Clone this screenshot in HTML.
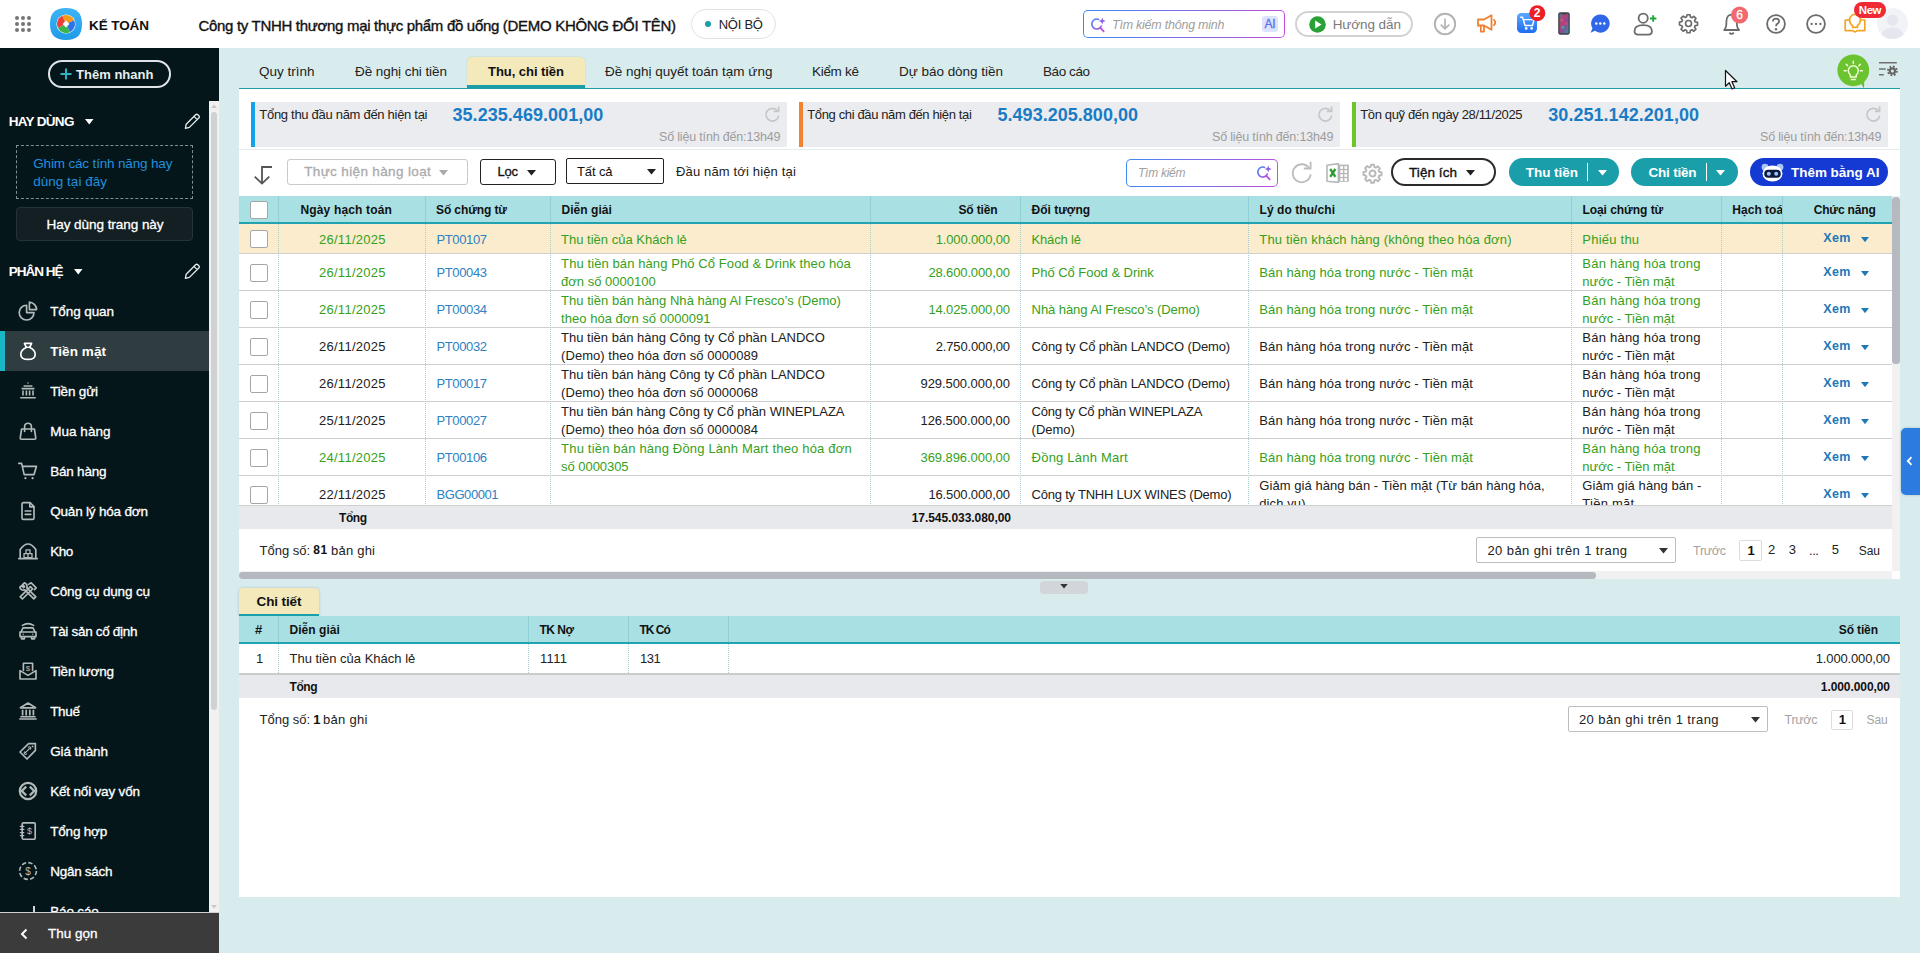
<!DOCTYPE html>
<html lang="vi"><head><meta charset="utf-8"><title>Kế toán - Thu, chi tiền</title>
<style>
html,body{margin:0;padding:0;}
body{width:1920px;height:953px;overflow:hidden;position:relative;background:#d8eced;font-family:"Liberation Sans", sans-serif;}
#root{position:absolute;left:0;top:0;width:1920px;height:953px;overflow:hidden;}
#root div,#root svg{position:absolute;box-sizing:border-box;}
.t{position:absolute;white-space:nowrap;display:block;}

.cb{background:#fff;border:1px solid #a6a6a6;border-radius:2px;}

</style></head><body><div id="root">
<div style="left:0px;top:0px;width:1920px;height:48px;background:#fff;"></div>
<div style="left:15px;top:16px;width:4px;height:4px;background:#757575;border-radius:50%;"></div>
<div style="left:21px;top:16px;width:4px;height:4px;background:#757575;border-radius:50%;"></div>
<div style="left:27px;top:16px;width:4px;height:4px;background:#757575;border-radius:50%;"></div>
<div style="left:15px;top:22px;width:4px;height:4px;background:#757575;border-radius:50%;"></div>
<div style="left:21px;top:22px;width:4px;height:4px;background:#757575;border-radius:50%;"></div>
<div style="left:27px;top:22px;width:4px;height:4px;background:#757575;border-radius:50%;"></div>
<div style="left:15px;top:28px;width:4px;height:4px;background:#757575;border-radius:50%;"></div>
<div style="left:21px;top:28px;width:4px;height:4px;background:#757575;border-radius:50%;"></div>
<div style="left:27px;top:28px;width:4px;height:4px;background:#757575;border-radius:50%;"></div>
<svg style="left:50px;top:8px" width="32" height="32" viewBox="0 0 32 32">
<defs><linearGradient id="lg" x1="0" y1="0" x2="0" y2="1"><stop offset="0" stop-color="#3db4f5"/><stop offset="1" stop-color="#1f9ae8"/></linearGradient></defs>
<path d="M16 0C27 0 32 5 32 16S27 32 16 32 0 27 0 16 5 0 16 0Z" fill="url(#lg)"/>
<circle cx="16" cy="16" r="9.6" fill="#fff"/>
<path d="M16 16 L9.6 9.6 A9 9 0 0 1 22.4 9.6Z" fill="#f59b1c" transform="rotate(20 16 16)"/>
<path d="M16 16 L22.4 9.6 A9 9 0 0 1 22.4 22.4Z" fill="#2a74e8" transform="rotate(20 16 16)"/>
<path d="M16 16 L22.4 22.4 A9 9 0 0 1 9.6 22.4Z" fill="#3bb54a" transform="rotate(20 16 16)"/>
<path d="M16 16 L9.6 22.4 A9 9 0 0 1 9.6 9.6Z" fill="#ef3e36" transform="rotate(20 16 16)"/>
<rect x="13.6" y="13.6" width="4.8" height="4.8" fill="#fff" transform="rotate(45 16 16)"/>
</svg>
<div style="left:691px;top:9px;width:85px;height:30px;background:#fff;border:1px solid #e2e2e2;border-radius:15px;"></div>
<div style="left:704.5px;top:21px;width:6px;height:6px;background:#1a9eaa;border-radius:50%;"></div>
<div style="left:0px;top:48px;width:219px;height:905px;background:#04161a;"></div>
<div style="left:209px;top:101px;width:10px;height:811px;background:#f1f1f1;"></div>
<div style="left:211px;top:112px;width:6px;height:597.5px;background:#cfd1d4;border-radius:3px;"></div>
<svg style="left:209px;top:101px" width="10" height="10"><path d="M2 7 L5 3.5 L8 7Z" fill="#c8c8c8"/></svg>
<svg style="left:209px;top:902px" width="10" height="10"><path d="M2 3 L5 6.5 L8 3Z" fill="#c8c8c8"/></svg>
<div style="left:48px;top:60px;width:123px;height:28px;border:2px solid #dfe5e6;border-radius:14px;"></div>
<svg style="left:60px;top:68px" width="12" height="12"><path d="M6 0.5V11.5M0.5 6H11.5" stroke="#2fb3c0" stroke-width="2" fill="none"/></svg>
<svg style="left:85px;top:119px" width="9" height="6"><path d="M0 0H8.5L4.25 5.5Z" fill="#fff"/></svg>
<div style="left:16px;top:145px;width:177px;height:54px;border:1px dashed #7f8f91;"></div>
<div style="left:16px;top:207px;width:177px;height:34px;background:#131f23;border:1px solid #263236;border-radius:4px;"></div>
<svg style="left:74px;top:269px" width="9" height="6"><path d="M0 0H8.5L4.25 5.5Z" fill="#fff"/></svg>
<svg style="left:184px;top:113px" width="17" height="17" viewBox="0 0 17 17"><path d="M2.2 11.2 L11.6 1.8 a1.6 1.6 0 0 1 2.2 0 l1 1 a1.6 1.6 0 0 1 0 2.2 L5.4 14.4 L1.4 15.4 Z M10 3.4 L13.2 6.6" fill="none" stroke="#e6ecec" stroke-width="1.3" stroke-linejoin="round"/></svg>
<svg style="left:184px;top:263px" width="17" height="17" viewBox="0 0 17 17"><path d="M2.2 11.2 L11.6 1.8 a1.6 1.6 0 0 1 2.2 0 l1 1 a1.6 1.6 0 0 1 0 2.2 L5.4 14.4 L1.4 15.4 Z M10 3.4 L13.2 6.6" fill="none" stroke="#e6ecec" stroke-width="1.3" stroke-linejoin="round"/></svg>
<div style="left:0px;top:331px;width:209px;height:40px;background:#2f3d40;"></div>
<div style="left:0px;top:331px;width:5px;height:40px;background:#19b6c6;"></div>
<div style="left:0;top:892px;width:209px;height:20px;overflow:hidden"><span class="t" style="left:50.2px;top:9.8px;font-size:13.5px;line-height:20px;letter-spacing:-.15px;color:#fff;-webkit-text-stroke:.3px #fff">Báo cáo</span><div style="left:33px;top:14px;width:2px;height:8px;background:#cfd6d6"></div></div>
<div style="left:0px;top:912px;width:219px;height:1px;background:#d0d0d0;"></div>
<div style="left:0px;top:913px;width:219px;height:40px;background:#3b3b3c;"></div>
<svg style="left:20px;top:928px" width="8" height="12"><path d="M6.5 1.5 L2 6 L6.5 10.5" fill="none" stroke="#fff" stroke-width="2"/></svg>
<div style="left:467px;top:57px;width:118px;height:31px;background:#f4e9bb;border-radius:5px 5px 0 0;border-bottom:3px solid #1a9eaa;box-shadow:0 0 2px rgba(0,0,0,.12);"></div>
<div style="left:239px;top:88px;width:1661px;height:1px;background:#1a9eaa;"></div>
<div style="left:239px;top:89px;width:1661px;height:482px;background:#fff;"></div>
<div style="left:251px;top:102px;width:536px;height:45px;background:#ebecf0;"></div>
<div style="left:251px;top:102px;width:4px;height:45px;background:#14a3e6;"></div>
<svg style="left:763.5px;top:106px" width="17" height="17" viewBox="0 0 24 24"><path d="M20.7 13.4 A9 9 0 1 1 19.1 7" fill="none" stroke="#c6c6c6" stroke-width="2.4"/><path d="M20.6 0.8 V7.5 H13.8" fill="none" stroke="#c6c6c6" stroke-width="2.4"/></svg>
<div style="left:799px;top:102px;width:541px;height:45px;background:#ebecf0;"></div>
<div style="left:799px;top:102px;width:4px;height:45px;background:#f08232;"></div>
<svg style="left:1316.5px;top:106px" width="17" height="17" viewBox="0 0 24 24"><path d="M20.7 13.4 A9 9 0 1 1 19.1 7" fill="none" stroke="#c6c6c6" stroke-width="2.4"/><path d="M20.6 0.8 V7.5 H13.8" fill="none" stroke="#c6c6c6" stroke-width="2.4"/></svg>
<div style="left:1352px;top:102px;width:536px;height:45px;background:#ebecf0;"></div>
<div style="left:1352px;top:102px;width:4px;height:45px;background:#6cc52f;"></div>
<svg style="left:1864.5px;top:106px" width="17" height="17" viewBox="0 0 24 24"><path d="M20.7 13.4 A9 9 0 1 1 19.1 7" fill="none" stroke="#c6c6c6" stroke-width="2.4"/><path d="M20.6 0.8 V7.5 H13.8" fill="none" stroke="#c6c6c6" stroke-width="2.4"/></svg>
<div style="left:239px;top:149px;width:1661px;height:1px;background:#e2ecec;"></div>
<svg style="left:253px;top:165px" width="20" height="21" viewBox="0 0 20 21"><path d="M19 2 H9 V18 M1.7 11.6 L9 18.6 L16.3 11.6" fill="none" stroke="#555" stroke-width="1.8"/></svg>
<div style="left:287px;top:159px;width:181px;height:26px;background:#fff;border:1px solid #c9c9c9;border-radius:3px;"></div>
<svg style="left:438.5px;top:169.5px" width="9" height="6"><path d="M0 0H9L4.5 5.5Z" fill="#ababab"/></svg>
<div style="left:480px;top:159px;width:76px;height:26px;background:#fff;border:1px solid #222;border-radius:3px;"></div>
<svg style="left:526.5px;top:169.5px" width="9" height="6"><path d="M0 0H9L4.5 5.5Z" fill="#222"/></svg>
<div style="left:566px;top:158px;width:98px;height:26px;background:#fff;border:1px solid #222;border-radius:2px;"></div>
<svg style="left:646.5px;top:168.5px" width="9" height="6"><path d="M0 0H9L4.5 5.5Z" fill="#222"/></svg>
<div style="left:1126px;top:159px;width:152px;height:28px;background:linear-gradient(90deg,#3d8bf0,#c04fe0);border-radius:5px;"></div>
<div style="left:1127.3px;top:160.3px;width:149.4px;height:25.4px;background:#fff;border-radius:4px;"></div>
<svg style="left:1255.5px;top:165px" width="16" height="16" viewBox="0 0 16 16"><defs><linearGradient id="g1" x1="0" y1="0" x2="1" y2="1"><stop offset="0" stop-color="#3f8cf0"/><stop offset="1" stop-color="#b44ee0"/></linearGradient></defs><path d="M9.2 2.6 A5 5 0 1 0 11.6 8.6" fill="none" stroke="url(#g1)" stroke-width="1.6"/><path d="M9.8 10.4 L14.2 14.8" stroke="#b44ee0" stroke-width="1.7" fill="none"/><path d="M12.2 0.4 L13.1 3.1 L15.8 4 L13.1 4.9 L12.2 7.6 L11.3 4.9 L8.6 4 L11.3 3.1 Z" fill="#8a5ce6"/></svg>
<svg style="left:1289.5px;top:160.5px" width="24" height="24" viewBox="0 0 24 24"><path d="M20.7 13.4 A9 9 0 1 1 19.1 7" fill="none" stroke="#bcbcbc" stroke-width="1.8"/><path d="M20.6 0.8 V7.5 H13.8" fill="none" stroke="#bcbcbc" stroke-width="1.8"/></svg>
<svg style="left:1326px;top:163px" width="24" height="20" viewBox="0 0 24 20"><rect x="11.5" y="1.6" width="11.3" height="17.2" fill="#b7b7b7"/><rect x="14.3" y="3.2" width="2.7" height="2.7" fill="#fff"/><rect x="14.3" y="7.2" width="2.7" height="2.7" fill="#fff"/><rect x="14.3" y="11.2" width="2.7" height="2.7" fill="#fff"/><rect x="14.3" y="15.2" width="2.7" height="2.7" fill="#fff"/><rect x="18.4" y="3.2" width="2.7" height="2.7" fill="#fff"/><rect x="18.4" y="7.2" width="2.7" height="2.7" fill="#fff"/><rect x="18.4" y="11.2" width="2.7" height="2.7" fill="#fff"/><rect x="18.4" y="15.2" width="2.7" height="2.7" fill="#fff"/><path d="M1 2.2 L12.4 0.6 V19.4 L1 18.2Z" fill="#fff" stroke="#b7b7b7" stroke-width="1.6" stroke-linejoin="round"/><path d="M4.2 6 L9.4 13.8 M9.4 6 L4.2 13.8" stroke="#2a9d2f" stroke-width="2.3"/></svg>
<svg style="left:1362.3px;top:162.5px" width="21" height="21" viewBox="0 0 24 24"><path d="M10.3 2h3.4l.5 2.7 1.6.7 2.3-1.6 2.4 2.4-1.6 2.3.7 1.6 2.7.5v3.4l-2.7.5-.7 1.6 1.6 2.3-2.4 2.4-2.3-1.6-1.6.7-.5 2.7h-3.4l-.5-2.7-1.6-.7-2.3 1.6-2.4-2.4 1.6-2.3-.7-1.6L1.7 13.7v-3.4l2.7-.5.7-1.6-1.6-2.3 2.4-2.4 2.3 1.6 1.6-.7z" fill="none" stroke="#b9b9b9" stroke-width="2.2" stroke-linejoin="round"/><circle cx="12" cy="12" r="3.4" fill="none" stroke="#b9b9b9" stroke-width="2.2"/></svg>
<div style="left:1391px;top:158px;width:105px;height:28px;background:#fff;border:2px solid #2b2b2b;border-radius:14px;"></div>
<svg style="left:1465.5px;top:170px" width="9" height="6"><path d="M0 0H9L4.5 5.5Z" fill="#222"/></svg>
<div style="left:1509px;top:158px;width:110px;height:28px;background:#1a9eaa;border-radius:14px;"></div>
<div style="left:1587px;top:163px;width:1px;height:18px;background:#fff;"></div>
<svg style="left:1597.5px;top:170px" width="9" height="6"><path d="M0 0H9L4.5 5.5Z" fill="#fff"/></svg>
<div style="left:1631px;top:158px;width:107px;height:28px;background:#1a9eaa;border-radius:14px;"></div>
<div style="left:1706px;top:163px;width:1px;height:18px;background:#fff;"></div>
<svg style="left:1716px;top:170px" width="9" height="6"><path d="M0 0H9L4.5 5.5Z" fill="#fff"/></svg>
<div style="left:1750px;top:158px;width:138px;height:28px;background:#1539d3;border-radius:14px;"></div>
<svg style="left:1760.5px;top:163px" width="23" height="19" viewBox="0 0 23 19"><circle cx="4" cy="4.2" r="3.4" fill="#a9c6f5"/><circle cx="19" cy="4.2" r="3.4" fill="#a9c6f5"/><ellipse cx="11.5" cy="10.5" rx="10" ry="8" fill="#fff"/><rect x="3.2" y="6.8" width="16.6" height="8" rx="4" fill="#0b1a3a"/><circle cx="7.8" cy="10.8" r="2" fill="#9fc2ff"/><circle cx="15.2" cy="10.8" r="2" fill="#9fc2ff"/></svg>
<div style="left:239px;top:196px;width:1653px;height:26px;background:#a9e0e4;"></div>
<div style="left:239px;top:222.1px;width:1653px;height:1.6px;background:#22a3af;"></div>
<div style="left:278.0px;top:196px;width:1px;height:26px;background:#8fcfd5;"></div>
<div style="left:278.0px;top:223.5px;width:0px;height:282px;border-left:1px dotted #a8cdd1;"></div>
<div style="left:425.0px;top:196px;width:1px;height:26px;background:#8fcfd5;"></div>
<div style="left:425.0px;top:223.5px;width:0px;height:282px;border-left:1px dotted #a8cdd1;"></div>
<div style="left:550.0px;top:196px;width:1px;height:26px;background:#8fcfd5;"></div>
<div style="left:550.0px;top:223.5px;width:0px;height:282px;border-left:1px dotted #a8cdd1;"></div>
<div style="left:870.0px;top:196px;width:1px;height:26px;background:#8fcfd5;"></div>
<div style="left:870.0px;top:223.5px;width:0px;height:282px;border-left:1px dotted #a8cdd1;"></div>
<div style="left:1020.0px;top:196px;width:1px;height:26px;background:#8fcfd5;"></div>
<div style="left:1020.0px;top:223.5px;width:0px;height:282px;border-left:1px dotted #a8cdd1;"></div>
<div style="left:1248.0px;top:196px;width:1px;height:26px;background:#8fcfd5;"></div>
<div style="left:1248.0px;top:223.5px;width:0px;height:282px;border-left:1px dotted #a8cdd1;"></div>
<div style="left:1571.0px;top:196px;width:1px;height:26px;background:#8fcfd5;"></div>
<div style="left:1571.0px;top:223.5px;width:0px;height:282px;border-left:1px dotted #a8cdd1;"></div>
<div style="left:1721.0px;top:196px;width:1px;height:26px;background:#8fcfd5;"></div>
<div style="left:1721.0px;top:223.5px;width:0px;height:282px;border-left:1px dotted #a8cdd1;"></div>
<div style="left:1782.0px;top:196px;width:1px;height:26px;background:#8fcfd5;"></div>
<div style="left:1782.0px;top:223.5px;width:0px;height:282px;border-left:1px dotted #a8cdd1;"></div>
<div style="left:239px;top:223.5px;width:1653px;height:29.5px;background:#faeccc;"></div>
<div style="left:278.0px;top:223.5px;width:0px;height:29.5px;border-left:1px dotted #a8cdd1;"></div>
<div style="left:425.0px;top:223.5px;width:0px;height:29.5px;border-left:1px dotted #a8cdd1;"></div>
<div style="left:550.0px;top:223.5px;width:0px;height:29.5px;border-left:1px dotted #a8cdd1;"></div>
<div style="left:870.0px;top:223.5px;width:0px;height:29.5px;border-left:1px dotted #a8cdd1;"></div>
<div style="left:1020.0px;top:223.5px;width:0px;height:29.5px;border-left:1px dotted #a8cdd1;"></div>
<div style="left:1248.0px;top:223.5px;width:0px;height:29.5px;border-left:1px dotted #a8cdd1;"></div>
<div style="left:1571.0px;top:223.5px;width:0px;height:29.5px;border-left:1px dotted #a8cdd1;"></div>
<div style="left:1721.0px;top:223.5px;width:0px;height:29.5px;border-left:1px dotted #a8cdd1;"></div>
<div style="left:1782.0px;top:223.5px;width:0px;height:29.5px;border-left:1px dotted #a8cdd1;"></div>
<div style="left:239px;top:253px;width:1653px;height:1px;background:#cfcfcf;"></div>
<div style="left:239px;top:290px;width:1653px;height:1px;background:#cfcfcf;"></div>
<div style="left:239px;top:327px;width:1653px;height:1px;background:#cfcfcf;"></div>
<div style="left:239px;top:364px;width:1653px;height:1px;background:#cfcfcf;"></div>
<div style="left:239px;top:401px;width:1653px;height:1px;background:#cfcfcf;"></div>
<div style="left:239px;top:438px;width:1653px;height:1px;background:#cfcfcf;"></div>
<div style="left:239px;top:475px;width:1653px;height:1px;background:#cfcfcf;"></div>
<div class="cb" style="left:250px;top:201px;width:18px;height:18px"></div>
<div class="cb" style="left:250px;top:230.2px;width:18px;height:18px"></div>
<div class="cb" style="left:250px;top:263.5px;width:18px;height:18px"></div>
<div class="cb" style="left:250px;top:300.5px;width:18px;height:18px"></div>
<div class="cb" style="left:250px;top:337.5px;width:18px;height:18px"></div>
<div class="cb" style="left:250px;top:374.5px;width:18px;height:18px"></div>
<div class="cb" style="left:250px;top:411.5px;width:18px;height:18px"></div>
<div class="cb" style="left:250px;top:448.5px;width:18px;height:18px"></div>
<div class="cb" style="left:250px;top:485.5px;width:18px;height:18px"></div>
<svg style="left:1861px;top:236.6px" width="8" height="5.2" viewBox="0 0 8 5.2"><path d="M0 0H8L4 5.2Z" fill="#1f78b8"/></svg>
<svg style="left:1861px;top:270.7px" width="8" height="5.2" viewBox="0 0 8 5.2"><path d="M0 0H8L4 5.2Z" fill="#1f78b8"/></svg>
<svg style="left:1861px;top:307.7px" width="8" height="5.2" viewBox="0 0 8 5.2"><path d="M0 0H8L4 5.2Z" fill="#1f78b8"/></svg>
<svg style="left:1861px;top:344.7px" width="8" height="5.2" viewBox="0 0 8 5.2"><path d="M0 0H8L4 5.2Z" fill="#1f78b8"/></svg>
<svg style="left:1861px;top:381.7px" width="8" height="5.2" viewBox="0 0 8 5.2"><path d="M0 0H8L4 5.2Z" fill="#1f78b8"/></svg>
<svg style="left:1861px;top:418.7px" width="8" height="5.2" viewBox="0 0 8 5.2"><path d="M0 0H8L4 5.2Z" fill="#1f78b8"/></svg>
<svg style="left:1861px;top:455.7px" width="8" height="5.2" viewBox="0 0 8 5.2"><path d="M0 0H8L4 5.2Z" fill="#1f78b8"/></svg>
<svg style="left:1861px;top:492.7px" width="8" height="5.2" viewBox="0 0 8 5.2"><path d="M0 0H8L4 5.2Z" fill="#1f78b8"/></svg>
<div style="left:239px;top:505px;width:1653px;height:1px;background:#cfcfcf;z-index:2;"></div>
<div style="left:239px;top:506px;width:1653px;height:23px;background:#e8e9ed;z-index:2;"></div>
<div style="left:1892px;top:196px;width:8px;height:375px;background:#f1f1f1;"></div>
<div style="left:1892px;top:197px;width:7.5px;height:166.5px;background:#b6b9c0;border-radius:3.5px;"></div>
<div style="left:1476px;top:537px;width:200px;height:26px;background:#fff;border:1px solid #bdbdbd;border-radius:2px;"></div>
<svg style="left:1658.5px;top:547.5px" width="9" height="6"><path d="M0 0H9L4.5 5.5Z" fill="#333"/></svg>
<div style="left:1739px;top:540px;width:23px;height:21px;background:#fff;border:1px solid #dcdcdc;border-radius:2px;"></div>
<div style="left:239px;top:571px;width:1653px;height:8px;background:#f1f1f1;"></div>
<div style="left:1892px;top:571px;width:8px;height:8px;background:#fff;"></div>
<div style="left:239px;top:571.5px;width:1357px;height:7.5px;background:#b5b8be;border-radius:4px;"></div>
<div style="left:1040px;top:581.3px;width:48px;height:12.7px;background:#d2d6db;border-radius:4px;"></div>
<svg style="left:1059.5px;top:584px" width="8" height="5" viewBox="0 0 9 6"><path d="M0 0H9L4.5 5.5Z" fill="#333"/></svg>
<div style="left:239px;top:587.5px;width:80px;height:28.5px;background:#f4e9bb;border-radius:4px 4px 0 0;border-bottom:2px solid #1a9eaa;box-shadow:0 0 3px rgba(0,0,0,.18);"></div>
<div style="left:239px;top:616px;width:1661px;height:281px;background:#fff;"></div>
<div style="left:239px;top:616px;width:1661px;height:26.5px;background:#a9e0e4;"></div>
<div style="left:239px;top:642.2px;width:1661px;height:1.7px;background:#22a3af;"></div>
<div style="left:278.0px;top:616px;width:1px;height:26px;background:#8fcfd5;"></div>
<div style="left:278.0px;top:644px;width:0px;height:29px;border-left:1px dotted #a8cdd1;"></div>
<div style="left:528.0px;top:616px;width:1px;height:26px;background:#8fcfd5;"></div>
<div style="left:528.0px;top:644px;width:0px;height:29px;border-left:1px dotted #a8cdd1;"></div>
<div style="left:628.0px;top:616px;width:1px;height:26px;background:#8fcfd5;"></div>
<div style="left:628.0px;top:644px;width:0px;height:29px;border-left:1px dotted #a8cdd1;"></div>
<div style="left:728.0px;top:616px;width:1px;height:26px;background:#8fcfd5;"></div>
<div style="left:728.0px;top:644px;width:0px;height:29px;border-left:1px dotted #a8cdd1;"></div>
<div style="left:239px;top:673px;width:1661px;height:2px;background:#cbcbcb;"></div>
<div style="left:239px;top:675px;width:1661px;height:23px;background:#e8e9ed;"></div>
<div style="left:1568px;top:706px;width:200px;height:26px;background:#fff;border:1px solid #bdbdbd;border-radius:2px;"></div>
<svg style="left:1750.5px;top:716.5px" width="9" height="6"><path d="M0 0H9L4.5 5.5Z" fill="#333"/></svg>
<div style="left:1831px;top:709.5px;width:22px;height:20px;background:#fff;border:1px solid #dcdcdc;border-radius:2px;"></div>
<div style="left:1083px;top:10px;width:202px;height:28px;background:linear-gradient(90deg,#3d8bf0,#c04fe0);border-radius:5px;"></div>
<div style="left:1084.3px;top:11.3px;width:199.4px;height:25.4px;background:#fff;border-radius:4px;"></div>
<svg style="left:1090px;top:16.5px" width="16" height="16" viewBox="0 0 16 16"><defs><linearGradient id="g2" x1="0" y1="0" x2="1" y2="1"><stop offset="0" stop-color="#3f8cf0"/><stop offset="1" stop-color="#b44ee0"/></linearGradient></defs><path d="M9.2 2.6 A5 5 0 1 0 11.6 8.6" fill="none" stroke="url(#g2)" stroke-width="1.6"/><path d="M9.8 10.4 L14.2 14.8" stroke="#b44ee0" stroke-width="1.7" fill="none"/><path d="M12.2 0.4 L13.1 3.1 L15.8 4 L13.1 4.9 L12.2 7.6 L11.3 4.9 L8.6 4 L11.3 3.1 Z" fill="#8a5ce6"/></svg>
<div style="left:1262px;top:16px;width:16px;height:15.5px;background:#dde2ff;border-radius:3px;"></div>
<div style="left:1294.5px;top:11px;width:118px;height:26px;background:#fff;border:2px solid #d2d2d2;border-radius:13px;"></div>
<svg style="left:1308.5px;top:15.6px" width="17" height="17" viewBox="0 0 17 17"><circle cx="8.5" cy="8.5" r="8.3" fill="#2aa136"/><path d="M6.1 4.4 L12.6 8.5 L6.1 12.6Z" fill="#fff"/></svg>
<svg style="left:1433px;top:12px" width="24" height="24" viewBox="0 0 24 24"><circle cx="12" cy="12" r="10.2" fill="none" stroke="#b3b3b3" stroke-width="1.9"/><path d="M12 6.5V16.5M7.8 12.6L12 16.8L16.2 12.6" fill="none" stroke="#b3b3b3" stroke-width="1.7"/></svg>
<svg style="left:1476px;top:13px" width="22" height="21" viewBox="0 0 22 21"><path d="M2 6.5 H8 L15.5 2.2 V16.8 L8 12.5 H2 Z" fill="none" stroke="#f0802f" stroke-width="1.8" stroke-linejoin="round"/><path d="M4.8 12.8 V18.6 H8 V12.8" fill="none" stroke="#f0802f" stroke-width="1.8" stroke-linejoin="round"/><path d="M18 6.8 Q20.6 9.5 18 12.2" fill="none" stroke="#f0802f" stroke-width="1.8" stroke-linecap="round"/></svg>
<svg style="left:1517px;top:5px" width="30" height="29" viewBox="0 0 30 29"><defs><linearGradient id="ct" x1="0" y1="0" x2="0" y2="1"><stop offset="0" stop-color="#5aa8ff"/><stop offset="1" stop-color="#1f6df0"/></linearGradient></defs><rect x="0" y="8" width="20" height="20" rx="4.5" fill="url(#ct)"/><path d="M3.2 12.2 H5.6 L8 20.5 H15.5 L17 14.6 H6.6" fill="none" stroke="#fff" stroke-width="1.4" stroke-linejoin="round"/><circle cx="9.2" cy="23.4" r="1.3" fill="#fff"/><circle cx="14.6" cy="23.4" r="1.3" fill="#fff"/><circle cx="20.3" cy="8.2" r="8" fill="#ee1c25"/></svg>
<svg style="left:1558px;top:12.3px" width="12" height="23" viewBox="0 0 12 23"><defs><linearGradient id="ph" x1="0" y1="0" x2="1" y2="1"><stop offset="0" stop-color="#3f7fae"/><stop offset=".3" stop-color="#b8426e"/><stop offset=".6" stop-color="#8a4a9c"/><stop offset="1" stop-color="#2e9a8c"/></linearGradient></defs><rect x="0.2" y="0.2" width="11.6" height="22.6" rx="2.2" fill="#3c4248"/><rect x="1.5" y="1.7" width="9" height="19.6" rx="1" fill="url(#ph)"/><circle cx="4" cy="8" r="1.6" fill="#e0566f" opacity=".8"/><circle cx="8" cy="11.5" r="1.8" fill="#d9476b" opacity=".7"/><circle cx="5" cy="15.5" r="1.7" fill="#3fb0a0" opacity=".7"/><rect x="3.6" y="1" width="4.8" height="1.5" rx=".7" fill="#3c4248"/></svg>
<svg style="left:1589.8px;top:14.2px" width="20" height="20" viewBox="0 0 21 21"><path d="M10.8 0.4 A9.6 9.6 0 1 1 5.2 17.6 L0.6 19.8 L2.6 15 A9.6 9.6 0 0 1 10.8 0.4Z" fill="#2f67e8"/><circle cx="6.6" cy="10" r="1.35" fill="#fff"/><circle cx="10.8" cy="10" r="1.35" fill="#fff"/><circle cx="15" cy="10" r="1.35" fill="#fff"/></svg>
<svg style="left:1633px;top:12px" width="25" height="24" viewBox="0 0 25 24"><circle cx="10.2" cy="6.2" r="4.6" fill="none" stroke="#6b6b6b" stroke-width="1.8"/><path d="M1.5 19.2 C1.5 15.2 5 13.2 10.2 13.2 S18.9 15.2 18.9 19.2 C18.9 21.4 17.4 22.6 15.4 22.6 H5 C3 22.6 1.5 21.4 1.5 19.2Z" fill="none" stroke="#6b6b6b" stroke-width="1.8"/><path d="M20.2 3.3 V9.7 M17 6.5 H23.4" stroke="#1fa83a" stroke-width="1.9"/></svg>
<svg style="left:1677.8px;top:13.3px" width="21" height="21" viewBox="0 0 24 24"><path d="M10.3 2h3.4l.5 2.7 1.6.7 2.3-1.6 2.4 2.4-1.6 2.3.7 1.6 2.7.5v3.4l-2.7.5-.7 1.6 1.6 2.3-2.4 2.4-2.3-1.6-1.6.7-.5 2.7h-3.4l-.5-2.7-1.6-.7-2.3 1.6-2.4-2.4 1.6-2.3-.7-1.6L1.7 13.7v-3.4l2.7-.5.7-1.6-1.6-2.3 2.4-2.4 2.3 1.6 1.6-.7z" fill="none" stroke="#6b6b6b" stroke-width="1.9" stroke-linejoin="round"/><circle cx="12" cy="12" r="3.4" fill="none" stroke="#6b6b6b" stroke-width="1.9"/></svg>
<svg style="left:1720px;top:6px" width="30" height="30" viewBox="0 0 30 30"><path d="M4.2 24 C6.6 21.6 6.4 18.4 6.4 15.6 C6.4 11 8.6 8.6 11.6 8.6 S16.8 11 16.8 15.6 C16.8 18.4 16.6 21.6 19 24 Z" fill="none" stroke="#6b6b6b" stroke-width="1.8" stroke-linejoin="round"/><path d="M9.4 26.6 Q11.6 29.2 13.8 26.6" fill="none" stroke="#6b6b6b" stroke-width="1.7"/><circle cx="19.6" cy="9" r="8.6" fill="#f2686e"/></svg>
<svg style="left:1765px;top:13px" width="22" height="22" viewBox="0 0 22 22"><circle cx="11" cy="11" r="8.9" fill="none" stroke="#6b6b6b" stroke-width="1.8"/><path d="M7.9 8.6 C7.9 6.6 9.3 5.6 11 5.6 S14.1 6.7 14.1 8.4 C14.1 10.6 11 10.6 11 13.2" fill="none" stroke="#6b6b6b" stroke-width="1.8"/><circle cx="11" cy="16.2" r="1.2" fill="#6b6b6b"/></svg>
<svg style="left:1805.2px;top:13px" width="22" height="22" viewBox="0 0 22 22"><circle cx="11" cy="11" r="8.9" fill="none" stroke="#6b6b6b" stroke-width="1.8"/><circle cx="6.6" cy="11" r="1.15" fill="#6b6b6b"/><circle cx="11" cy="11" r="1.15" fill="#6b6b6b"/><circle cx="15.4" cy="11" r="1.15" fill="#6b6b6b"/></svg>
<svg style="left:1877px;top:8.4px" width="31" height="31" viewBox="0 0 32 32"><defs><clipPath id="av"><circle cx="16" cy="16" r="16"/></clipPath></defs><circle cx="16" cy="16" r="16" fill="#f1f3f7"/><g clip-path="url(#av)"><circle cx="16" cy="12.4" r="5.8" fill="#e4e8ee"/><path d="M3.5 34 C3.5 24 9 20.2 16 20.2 S28.5 24 28.5 34Z" fill="#e4e8ee"/></g></svg>
<svg style="left:1844px;top:12px" width="22" height="21" viewBox="0 0 22 21"><path d="M1.2 8 V18.6 H8.4 L11 20 L13.6 18.6 H20.8 V8 H17" fill="none" stroke="#f3a52a" stroke-width="1.7" stroke-linejoin="round"/><path d="M1.2 8 H5" stroke="#f3a52a" stroke-width="1.7"/><path d="M8.6 13.6 C6.4 12 5.6 10 5.6 7.8 A5.4 5.4 0 0 1 16.4 7.8 C16.4 10 15.6 12 13.4 13.6 V15.4 H8.6Z" fill="#fff" stroke="#f3a52a" stroke-width="1.7" stroke-linejoin="round"/></svg>
<div style="left:1854px;top:2px;width:32px;height:16px;background:#ef2a35;border-radius:8px;"></div>
<svg style="left:1836.8px;top:54.3px" width="34" height="36" viewBox="0 0 34 36"><path d="M23.5 28.5 L27 34.6 L27.3 25Z" fill="#63bd2c"/><circle cx="16.3" cy="16.3" r="15.9" fill="#6ac32f"/><g transform="translate(0,0.9)"><path d="M13.4 20.2 C11.7 18.8 11.3 17.2 11.3 15.9 A5 5 0 0 1 21.3 15.9 C21.3 17.2 20.9 18.8 19.2 20.2 V22.2 H13.4Z" fill="none" stroke="#f3ffd6" stroke-width="1.5" stroke-linejoin="round"/><path d="M13.8 24.6 H18.8" stroke="#f3ffd6" stroke-width="1.5"/><path d="M16.3 6.4 V8.6 M9.2 9.4 L10.7 10.9 M23.4 9.4 L21.9 10.9 M7.2 15.9 H9.2 M23.4 15.9 H25.4" stroke="#f3ffd6" stroke-width="1.5" stroke-linecap="round"/></g></svg>
<svg style="left:1878px;top:61px" width="22" height="18" viewBox="0 0 22 18"><path d="M1 1.8 H18.8 M1 7.9 H7.8 M1 13.8 H5.8" stroke="#707070" stroke-width="1.5"/><circle cx="14.4" cy="9.9" r="4.4" fill="none" stroke="#666" stroke-width="2" stroke-dasharray="1.75 1.7"/><circle cx="14.4" cy="9.9" r="2.6" fill="none" stroke="#666" stroke-width="2.2"/></svg>
<svg style="left:1724px;top:69px" width="16" height="22" viewBox="0 0 16 22"><path d="M1.5 1.5 V17.2 L5.3 13.7 L8 20 L10.6 18.8 L7.9 12.7 H13Z" fill="#fff" stroke="#111" stroke-width="1.2" stroke-linejoin="round"/></svg>
<div style="left:1901px;top:428px;width:19px;height:67px;background:#2c7be0;border-radius:5px 0 0 5px;box-shadow:0 0 3px rgba(0,0,0,.2);"></div>
<svg style="left:1906px;top:456px" width="7" height="10" viewBox="0 0 7 10"><path d="M5.5 1.2 L1.8 5 L5.5 8.8" fill="none" stroke="#fff" stroke-width="1.8"/></svg>
<svg style="left:18px;top:301px" width="20" height="20" viewBox="0 0 20 20" fill="none" stroke="#b3baba" stroke-width="1.65" stroke-linejoin="round" stroke-linecap="round"><path d="M8.6 4.2 A7.4 7.4 0 1 0 16 11.6 H8.6Z"/><path d="M11.4 1 V8.6 H18.6 C18.6 5 15.6 1.4 11.4 1Z"/></svg>
<svg style="left:18px;top:341px" width="20" height="20" viewBox="0 0 20 20" fill="none" stroke="#fff" stroke-width="1.65" stroke-linejoin="round" stroke-linecap="round"><path d="M6.4 2.4 H13.6 L11.8 6.2 H8.2Z"/><path d="M8.2 6.4 C5 7.8 2.8 10.4 2.8 13.4 C2.8 16.6 5.6 18.4 10 18.4 S17.2 16.6 17.2 13.4 C17.2 10.4 15 7.8 11.8 6.4"/></svg>
<svg style="left:18px;top:381px" width="20" height="20" viewBox="0 0 20 20" fill="none" stroke="#b3baba" stroke-width="1.65" stroke-linejoin="round" stroke-linecap="round"><path d="M10 1.6 V2.6 M5.6 5 H14.4 M3.6 7.6 H16.4 M5 9.6 V14.6 M8.4 9.6 V14.6 M11.6 9.6 V14.6 M15 9.6 V14.6 M2.2 16.8 H17.8" stroke-width="1.6" stroke-linecap="butt"/></svg>
<svg style="left:18px;top:421px" width="20" height="20" viewBox="0 0 20 20" fill="none" stroke="#b3baba" stroke-width="1.65" stroke-linejoin="round" stroke-linecap="round"><path d="M3.6 8 H16.4 L17.8 17 A1 1 0 0 1 16.8 18.2 H3.2 A1 1 0 0 1 2.2 17Z"/><path d="M6.6 10.4 V5.6 A3.4 3.4 0 0 1 13.4 5.6 V10.4"/></svg>
<svg style="left:18px;top:461px" width="20" height="20" viewBox="0 0 20 20" fill="none" stroke="#b3baba" stroke-width="1.65" stroke-linejoin="round" stroke-linecap="round"><path d="M0.8 2.4 H3.6 L6.2 13.6 H16 L18.4 5.4 H4.4"/><circle cx="7.4" cy="17.2" r="1.1" fill="#b3baba" stroke="none"/><circle cx="14.6" cy="17.2" r="1.1" fill="#b3baba" stroke="none"/></svg>
<svg style="left:18px;top:501px" width="20" height="20" viewBox="0 0 20 20" fill="none" stroke="#b3baba" stroke-width="1.65" stroke-linejoin="round" stroke-linecap="round"><path d="M4 3 A1.4 1.4 0 0 1 5.4 1.6 H12 L16 5.6 V17 A1.4 1.4 0 0 1 14.6 18.4 H5.4 A1.4 1.4 0 0 1 4 17Z"/><path d="M11.8 1.8 V5.8 H15.8"/><path d="M7.2 10 H12.8 M7.2 13.4 H12.8"/></svg>
<svg style="left:18px;top:541px" width="20" height="20" viewBox="0 0 20 20" fill="none" stroke="#b3baba" stroke-width="1.65" stroke-linejoin="round" stroke-linecap="round"><path d="M2.2 16.6 V8.6 C4.6 5.2 7.2 3 10 3 S15.4 5.2 17.8 8.6 V16.6"/><path d="M0.8 17.6 H19.2" stroke-width="1.7"/><path d="M6 12.6 H10 V16.6 H6Z M10 12.6 H14 V16.6 H10Z M8 8.8 H12 V12.6 H8Z" stroke-width="1.3"/></svg>
<svg style="left:18px;top:581px" width="20" height="20" viewBox="0 0 20 20" fill="none" stroke="#b3baba" stroke-width="1.65" stroke-linejoin="round" stroke-linecap="round"><path d="M2.2 15.8 L12.4 5.6 L14.6 7.8 L4.4 18Z"/><path d="M10.4 3.4 L13.2 1.8 L18.2 6.8 L16.4 8.6"/><path d="M17.8 15.8 L8.8 6.8 C9.6 4.6 8.6 2.6 6.4 1.8 L4.6 3.6 L6.6 5.6 L5.6 6.6 L3.6 4.6 L1.8 6.4 C2.6 8.6 4.6 9.6 6.8 8.8 L15.8 17.8Z"/></svg>
<svg style="left:18px;top:621px" width="20" height="20" viewBox="0 0 20 20" fill="none" stroke="#b3baba" stroke-width="1.65" stroke-linejoin="round" stroke-linecap="round"><path d="M4.4 4.4 Q10 0.8 15.6 4.4"/><path d="M3 11 L5 6.8 H15 L17 11"/><path d="M2 11 H18 V15.6 H2Z"/><path d="M3.4 15.8 V17.8 H6.4 V15.8 M13.6 15.8 V17.8 H16.6 V15.8"/><circle cx="5.2" cy="13.2" r="0.7" fill="#b3baba" stroke="none"/><circle cx="14.8" cy="13.2" r="0.7" fill="#b3baba" stroke="none"/></svg>
<svg style="left:18px;top:661px" width="20" height="20" viewBox="0 0 20 20" fill="none" stroke="#b3baba" stroke-width="1.65" stroke-linejoin="round" stroke-linecap="round"><path d="M5.4 9.4 V2.2 H14.6 V9.4"/><path d="M2 9.6 V18 H18 V9.6 L10 14.4Z"/><text x="10" y="9.6" font-size="8" font-family="Liberation Sans, sans-serif" fill="#b3baba" stroke="none" text-anchor="middle">$</text></svg>
<svg style="left:18px;top:701px" width="20" height="20" viewBox="0 0 20 20" fill="none" stroke="#b3baba" stroke-width="1.65" stroke-linejoin="round" stroke-linecap="round"><path d="M2.4 6.8 L10 2 L17.6 6.8Z"/><path d="M4.6 8.8 V14.6 M8.2 8.8 V14.6 M11.8 8.8 V14.6 M15.4 8.8 V14.6" stroke-width="1.7" stroke-linecap="butt"/><path d="M3 15.8 H17 M1.8 18 H18.2" stroke-width="1.5"/></svg>
<svg style="left:18px;top:741px" width="20" height="20" viewBox="0 0 20 20" fill="none" stroke="#b3baba" stroke-width="1.65" stroke-linejoin="round" stroke-linecap="round"><path d="M2 11 L10.6 2.6 L17.4 2.6 L17.4 9.4 L9 18Z"/><circle cx="14.6" cy="5.4" r="0.9" fill="#b3baba" stroke="none"/><path d="M7.4 11.6 L11.6 7.4" stroke-width="1.2"/><path d="M8.6 12.8 a1.4 1.4 0 1 1 -2 -2 M10.4 6.2 a1.4 1.4 0 1 1 2 2" stroke-width="1.1"/></svg>
<svg style="left:18px;top:781px" width="20" height="20" viewBox="0 0 20 20" fill="none" stroke="#b3baba" stroke-width="1.65" stroke-linejoin="round" stroke-linecap="round"><circle cx="10" cy="10" r="8.2" stroke-width="2.2"/><path d="M8.2 5.6 L3.8 10 L8.2 14.4 M11.8 5.6 L16.2 10 L11.8 14.4" stroke-width="2.2" stroke-linejoin="miter" stroke-linecap="butt"/></svg>
<svg style="left:18px;top:821px" width="20" height="20" viewBox="0 0 20 20" fill="none" stroke="#b3baba" stroke-width="1.65" stroke-linejoin="round" stroke-linecap="round"><path d="M4.2 3 A1.2 1.2 0 0 1 5.4 1.8 H16 A1.2 1.2 0 0 1 17.2 3 V17 A1.2 1.2 0 0 1 16 18.2 H5.4 A1.2 1.2 0 0 1 4.2 17Z"/><path d="M2.4 5.4 H5.8 M2.4 8.4 H5.8 M2.4 11.6 H5.8 M2.4 14.6 H5.8" stroke-width="1.3"/><text x="11.4" y="13.2" font-size="9" font-family="Liberation Sans, sans-serif" fill="#b3baba" stroke="none" text-anchor="middle">$</text></svg>
<svg style="left:18px;top:861px" width="20" height="20" viewBox="0 0 20 20" fill="none" stroke="#b3baba" stroke-width="1.65" stroke-linejoin="round" stroke-linecap="round"><circle cx="10" cy="10" r="8.4" stroke-dasharray="4.4 2.2" stroke-linecap="butt" stroke-width="1.6"/><text x="10" y="13.6" font-size="10" font-family="Liberation Sans, sans-serif" fill="#b3baba" stroke="none" text-anchor="middle">$</text></svg>
<span class="t" style="top:16.32px;font-size:13.5px;line-height:19px;color:#111;font-weight:700;letter-spacing:-0.086px;left:89px;">KẾ TOÁN</span>
<span class="t" style="top:14.80px;font-size:15px;line-height:21px;color:#111;-webkit-text-stroke:0.35px #111;letter-spacing:-0.305px;left:198.4px;">Công ty TNHH thương mại thực phẩm đồ uống (DEMO KHÔNG ĐỔI TÊN)</span>
<span class="t" style="top:16.00px;font-size:13px;line-height:18px;color:#222;letter-spacing:-0.243px;left:718.7px;">NỘI BỘ</span>
<span class="t" style="top:65.50px;font-size:13px;line-height:18px;color:#e8eeee;font-weight:700;letter-spacing:0.024px;left:76px;">Thêm nhanh</span>
<span class="t" style="top:112.42px;font-size:13.5px;line-height:19px;color:#fff;font-weight:700;letter-spacing:-0.690px;left:8.7px;">HAY DÙNG</span>
<span class="t" style="top:154.12px;font-size:13.5px;line-height:19px;color:#2190df;letter-spacing:-0.157px;left:33.2px;">Ghim các tính năng hay</span>
<span class="t" style="top:172.32px;font-size:13.5px;line-height:19px;color:#2190df;letter-spacing:0.022px;left:33.2px;">dùng tại đây</span>
<span class="t" style="top:215.12px;font-size:13.5px;line-height:19px;color:#fff;-webkit-text-stroke:0.3px #fff;letter-spacing:-0.044px;left:46.5px;">Hay dùng trang này</span>
<span class="t" style="top:262.42px;font-size:13.5px;line-height:19px;color:#fff;font-weight:700;letter-spacing:-1.000px;left:8.7px;">PHÂN HỆ</span>
<span class="t" style="top:302.32px;font-size:13.5px;line-height:19px;color:#fff;-webkit-text-stroke:0.3px #fff;letter-spacing:-0.095px;left:50.2px;">Tổng quan</span>
<span class="t" style="top:342.32px;font-size:13.5px;line-height:19px;color:#fff;font-weight:700;letter-spacing:0.076px;left:50.2px;">Tiền mặt</span>
<span class="t" style="top:382.32px;font-size:13.5px;line-height:19px;color:#fff;-webkit-text-stroke:0.3px #fff;letter-spacing:-0.180px;left:50.2px;">Tiền gửi</span>
<span class="t" style="top:422.32px;font-size:13.5px;line-height:19px;color:#fff;-webkit-text-stroke:0.3px #fff;letter-spacing:0.036px;left:50.2px;">Mua hàng</span>
<span class="t" style="top:462.32px;font-size:13.5px;line-height:19px;color:#fff;-webkit-text-stroke:0.3px #fff;letter-spacing:-0.216px;left:50.2px;">Bán hàng</span>
<span class="t" style="top:502.32px;font-size:13.5px;line-height:19px;color:#fff;-webkit-text-stroke:0.3px #fff;letter-spacing:-0.187px;left:50.2px;">Quản lý hóa đơn</span>
<span class="t" style="top:542.32px;font-size:13.5px;line-height:19px;color:#fff;-webkit-text-stroke:0.3px #fff;letter-spacing:-0.450px;left:50.2px;">Kho</span>
<span class="t" style="top:582.32px;font-size:13.5px;line-height:19px;color:#fff;-webkit-text-stroke:0.3px #fff;letter-spacing:-0.163px;left:50.2px;">Công cụ dụng cụ</span>
<span class="t" style="top:622.32px;font-size:13.5px;line-height:19px;color:#fff;-webkit-text-stroke:0.3px #fff;letter-spacing:-0.304px;left:50.2px;">Tài sản cố định</span>
<span class="t" style="top:662.32px;font-size:13.5px;line-height:19px;color:#fff;-webkit-text-stroke:0.3px #fff;letter-spacing:-0.180px;left:50.2px;">Tiền lương</span>
<span class="t" style="top:702.32px;font-size:13.5px;line-height:19px;color:#fff;-webkit-text-stroke:0.3px #fff;letter-spacing:-0.327px;left:50.2px;">Thuế</span>
<span class="t" style="top:742.32px;font-size:13.5px;line-height:19px;color:#fff;-webkit-text-stroke:0.3px #fff;letter-spacing:-0.093px;left:50.2px;">Giá thành</span>
<span class="t" style="top:782.32px;font-size:13.5px;line-height:19px;color:#fff;-webkit-text-stroke:0.3px #fff;letter-spacing:-0.179px;left:50.2px;">Kết nối vay vốn</span>
<span class="t" style="top:822.32px;font-size:13.5px;line-height:19px;color:#fff;-webkit-text-stroke:0.3px #fff;letter-spacing:-0.184px;left:50.2px;">Tổng hợp</span>
<span class="t" style="top:862.32px;font-size:13.5px;line-height:19px;color:#fff;-webkit-text-stroke:0.3px #fff;letter-spacing:-0.268px;left:50.2px;">Ngân sách</span>
<span class="t" style="top:923.82px;font-size:13.5px;line-height:19px;color:#fff;-webkit-text-stroke:0.3px #fff;left:48px;">Thu gọn</span>
<span class="t" style="top:61.82px;font-size:13.5px;line-height:19px;color:#222;left:259px;">Quy trình</span>
<span class="t" style="top:61.82px;font-size:13.5px;line-height:19px;color:#222;letter-spacing:-0.071px;left:355px;">Đề nghị chi tiền</span>
<span class="t" style="top:62.50px;font-size:13px;line-height:18px;color:#111;font-weight:700;letter-spacing:-0.047px;left:488px;">Thu, chi tiền</span>
<span class="t" style="top:61.82px;font-size:13.5px;line-height:19px;color:#222;left:605px;">Đề nghị quyết toán tạm ứng</span>
<span class="t" style="top:61.82px;font-size:13.5px;line-height:19px;color:#222;letter-spacing:-0.297px;left:812px;">Kiểm kê</span>
<span class="t" style="top:61.82px;font-size:13.5px;line-height:19px;color:#222;letter-spacing:-0.025px;left:899px;">Dự báo dòng tiền</span>
<span class="t" style="top:61.82px;font-size:13.5px;line-height:19px;color:#222;letter-spacing:-0.424px;left:1043px;">Báo cáo</span>
<span class="t" style="top:105.50px;font-size:13px;line-height:18px;color:#222;letter-spacing:-0.291px;left:259.3px;">Tổng thu đầu năm đến hiện tại</span>
<span class="t" style="top:103.46px;font-size:18px;line-height:25px;color:#1a7cc4;font-weight:700;letter-spacing:0.040px;left:452.5px;">35.235.469.001,00</span>
<span class="t" style="top:127.67px;font-size:12.5px;line-height:18px;color:#9c9c9c;letter-spacing:-0.172px;left:659px;">Số liệu tính đến:13h49</span>
<span class="t" style="top:105.50px;font-size:13px;line-height:18px;color:#222;letter-spacing:-0.372px;left:807.3px;">Tổng chi đầu năm đến hiện tại</span>
<span class="t" style="top:103.46px;font-size:18px;line-height:25px;color:#1a7cc4;font-weight:700;letter-spacing:0.024px;left:997.5px;">5.493.205.800,00</span>
<span class="t" style="top:127.67px;font-size:12.5px;line-height:18px;color:#9c9c9c;letter-spacing:-0.172px;left:1212px;">Số liệu tính đến:13h49</span>
<span class="t" style="top:105.50px;font-size:13px;line-height:18px;color:#222;letter-spacing:-0.369px;left:1360.3px;">Tồn quỹ đến ngày 28/11/2025</span>
<span class="t" style="top:103.46px;font-size:18px;line-height:25px;color:#1a7cc4;font-weight:700;letter-spacing:0.034px;left:1548.3px;">30.251.142.201,00</span>
<span class="t" style="top:127.67px;font-size:12.5px;line-height:18px;color:#9c9c9c;letter-spacing:-0.172px;left:1760px;">Số liệu tính đến:13h49</span>
<span class="t" style="top:161.82px;font-size:13.5px;line-height:19px;color:#ababab;-webkit-text-stroke:0.3px #ababab;letter-spacing:0.360px;left:304.2px;">Thực hiện hàng loạt</span>
<span class="t" style="top:162.50px;font-size:13px;line-height:18px;color:#111;-webkit-text-stroke:0.3px #111;letter-spacing:-0.234px;left:497.5px;">Lọc</span>
<span class="t" style="top:162.70px;font-size:13px;line-height:18px;color:#111;letter-spacing:-0.125px;left:577px;">Tất cả</span>
<span class="t" style="top:162.50px;font-size:13px;line-height:18px;color:#222;letter-spacing:0.151px;left:676px;">Đầu năm tới hiện tại</span>
<span class="t" style="top:165.34px;font-size:12px;line-height:17px;color:#a0a0a0;font-style:italic;letter-spacing:-0.263px;left:1138px;">Tìm kiếm</span>
<span class="t" style="top:162.82px;font-size:13.5px;line-height:19px;color:#111;-webkit-text-stroke:0.35px #111;letter-spacing:0.067px;left:1409px;">Tiện ích</span>
<span class="t" style="top:162.82px;font-size:13.5px;line-height:19px;color:#fff;font-weight:700;letter-spacing:-0.043px;left:1525.8px;">Thu tiền</span>
<span class="t" style="top:162.82px;font-size:13.5px;line-height:19px;color:#fff;font-weight:700;letter-spacing:-0.186px;left:1648.4px;">Chi tiền</span>
<span class="t" style="top:162.82px;font-size:13.5px;line-height:19px;color:#fff;font-weight:700;letter-spacing:-0.033px;left:1791px;">Thêm bằng AI</span>
<span class="t" style="top:201.54px;font-size:12px;line-height:17px;color:#111;font-weight:700;letter-spacing:0.149px;left:300.5px;">Ngày hạch toán</span>
<span class="t" style="top:201.54px;font-size:12px;line-height:17px;color:#111;font-weight:700;letter-spacing:-0.105px;left:436px;">Số chứng từ</span>
<span class="t" style="top:201.54px;font-size:12px;line-height:17px;color:#111;font-weight:700;letter-spacing:0.036px;left:561.5px;">Diễn giải</span>
<span class="t" style="top:201.54px;font-size:12px;line-height:17px;color:#111;font-weight:700;letter-spacing:-0.169px;left:958.5px;">Số tiền</span>
<span class="t" style="top:201.54px;font-size:12px;line-height:17px;color:#111;font-weight:700;left:1031.5px;">Đối tượng</span>
<span class="t" style="top:201.54px;font-size:12px;line-height:17px;color:#111;font-weight:700;letter-spacing:0.069px;left:1259.5px;">Lý do thu/chi</span>
<span class="t" style="top:201.54px;font-size:12px;line-height:17px;color:#111;font-weight:700;letter-spacing:-0.040px;left:1582.4px;">Loại chứng từ</span>
<span class="t" style="top:201.54px;font-size:12px;line-height:17px;color:#111;font-weight:700;letter-spacing:0.023px;left:1732.3px;width:50.2px;overflow:hidden;">Hạch toán</span>
<span class="t" style="top:201.54px;font-size:12px;line-height:17px;color:#111;font-weight:700;letter-spacing:-0.157px;left:1813.7px;">Chức năng</span>
<span class="t" style="top:230.70px;font-size:13px;line-height:18px;color:#35a020;letter-spacing:0.266px;left:319px;">26/11/2025</span>
<span class="t" style="top:230.70px;font-size:13px;line-height:18px;color:#2b82c4;letter-spacing:-0.378px;left:436.5px;">PT00107</span>
<span class="t" style="top:230.70px;font-size:13px;line-height:18px;color:#35a020;left:561.1px;">Thu tiền của Khách lẻ</span>
<span class="t" style="top:230.70px;font-size:13px;line-height:18px;color:#35a020;letter-spacing:-0.146px;right:910.15px;">1.000.000,00</span>
<span class="t" style="top:230.70px;font-size:13px;line-height:18px;color:#35a020;letter-spacing:-0.185px;left:1031.6px;">Khách lẻ</span>
<span class="t" style="top:230.70px;font-size:13px;line-height:18px;color:#35a020;letter-spacing:0.151px;left:1259.3px;">Thu tiền khách hàng (không theo hóa đơn)</span>
<span class="t" style="top:230.70px;font-size:13px;line-height:18px;color:#35a020;letter-spacing:0.233px;left:1582.3px;">Phiếu thu</span>
<span class="t" style="top:229.37px;font-size:12.5px;line-height:18px;color:#1f78b8;font-weight:700;letter-spacing:0.447px;left:1823.2px;">Xem</span>
<span class="t" style="top:263.70px;font-size:13px;line-height:18px;color:#35a020;letter-spacing:0.266px;left:319px;">26/11/2025</span>
<span class="t" style="top:263.70px;font-size:13px;line-height:18px;color:#2b82c4;letter-spacing:-0.378px;left:436.5px;">PT00043</span>
<span class="t" style="top:254.70px;font-size:13px;line-height:18px;color:#35a020;letter-spacing:0.094px;left:561.1px;">Thu tiền bán hàng Phố Cổ Food &amp; Drink theo hóa</span>
<span class="t" style="top:272.70px;font-size:13px;line-height:18px;color:#35a020;left:561.1px;">đơn số 0000100</span>
<span class="t" style="top:263.70px;font-size:13px;line-height:18px;color:#35a020;letter-spacing:-0.128px;right:910.13px;">28.600.000,00</span>
<span class="t" style="top:263.70px;font-size:13px;line-height:18px;color:#35a020;letter-spacing:-0.036px;left:1031.6px;">Phố Cổ Food &amp; Drink</span>
<span class="t" style="top:263.70px;font-size:13px;line-height:18px;color:#35a020;letter-spacing:0.106px;left:1259.3px;">Bán hàng hóa trong nước - Tiền mặt</span>
<span class="t" style="top:254.70px;font-size:13px;line-height:18px;color:#35a020;letter-spacing:0.234px;left:1582.3px;">Bán hàng hóa trong</span>
<span class="t" style="top:272.70px;font-size:13px;line-height:18px;color:#35a020;left:1582.3px;">nước - Tiền mặt</span>
<span class="t" style="top:263.47px;font-size:12.5px;line-height:18px;color:#1f78b8;font-weight:700;letter-spacing:0.447px;left:1823.2px;">Xem</span>
<span class="t" style="top:300.70px;font-size:13px;line-height:18px;color:#35a020;letter-spacing:0.266px;left:319px;">26/11/2025</span>
<span class="t" style="top:300.70px;font-size:13px;line-height:18px;color:#2b82c4;letter-spacing:-0.378px;left:436.5px;">PT00034</span>
<span class="t" style="top:291.70px;font-size:13px;line-height:18px;color:#35a020;letter-spacing:0.025px;left:561.1px;">Thu tiền bán hàng Nhà hàng Al Fresco’s (Demo)</span>
<span class="t" style="top:309.70px;font-size:13px;line-height:18px;color:#35a020;letter-spacing:0.033px;left:561.1px;">theo hóa đơn số 0000091</span>
<span class="t" style="top:300.70px;font-size:13px;line-height:18px;color:#35a020;letter-spacing:-0.128px;right:910.13px;">14.025.000,00</span>
<span class="t" style="top:300.70px;font-size:13px;line-height:18px;color:#35a020;letter-spacing:-0.076px;left:1031.6px;">Nhà hàng Al Fresco’s (Demo)</span>
<span class="t" style="top:300.70px;font-size:13px;line-height:18px;color:#35a020;letter-spacing:0.106px;left:1259.3px;">Bán hàng hóa trong nước - Tiền mặt</span>
<span class="t" style="top:291.70px;font-size:13px;line-height:18px;color:#35a020;letter-spacing:0.234px;left:1582.3px;">Bán hàng hóa trong</span>
<span class="t" style="top:309.70px;font-size:13px;line-height:18px;color:#35a020;left:1582.3px;">nước - Tiền mặt</span>
<span class="t" style="top:300.47px;font-size:12.5px;line-height:18px;color:#1f78b8;font-weight:700;letter-spacing:0.447px;left:1823.2px;">Xem</span>
<span class="t" style="top:337.70px;font-size:13px;line-height:18px;color:#212121;letter-spacing:0.266px;left:319px;">26/11/2025</span>
<span class="t" style="top:337.70px;font-size:13px;line-height:18px;color:#2b82c4;letter-spacing:-0.378px;left:436.5px;">PT00032</span>
<span class="t" style="top:328.70px;font-size:13px;line-height:18px;color:#212121;left:561.1px;">Thu tiền bán hàng Công ty Cổ phần LANDCO</span>
<span class="t" style="top:346.70px;font-size:13px;line-height:18px;color:#212121;letter-spacing:0.041px;left:561.1px;">(Demo) theo hóa đơn số 0000089</span>
<span class="t" style="top:337.70px;font-size:13px;line-height:18px;color:#212121;letter-spacing:-0.146px;right:910.15px;">2.750.000,00</span>
<span class="t" style="top:337.70px;font-size:13px;line-height:18px;color:#212121;letter-spacing:-0.133px;left:1031.6px;">Công ty Cổ phần LANDCO (Demo)</span>
<span class="t" style="top:337.70px;font-size:13px;line-height:18px;color:#212121;letter-spacing:0.106px;left:1259.3px;">Bán hàng hóa trong nước - Tiền mặt</span>
<span class="t" style="top:328.70px;font-size:13px;line-height:18px;color:#212121;letter-spacing:0.234px;left:1582.3px;">Bán hàng hóa trong</span>
<span class="t" style="top:346.70px;font-size:13px;line-height:18px;color:#212121;left:1582.3px;">nước - Tiền mặt</span>
<span class="t" style="top:337.47px;font-size:12.5px;line-height:18px;color:#1f78b8;font-weight:700;letter-spacing:0.447px;left:1823.2px;">Xem</span>
<span class="t" style="top:374.70px;font-size:13px;line-height:18px;color:#212121;letter-spacing:0.266px;left:319px;">26/11/2025</span>
<span class="t" style="top:374.70px;font-size:13px;line-height:18px;color:#2b82c4;letter-spacing:-0.378px;left:436.5px;">PT00017</span>
<span class="t" style="top:365.70px;font-size:13px;line-height:18px;color:#212121;left:561.1px;">Thu tiền bán hàng Công ty Cổ phần LANDCO</span>
<span class="t" style="top:383.70px;font-size:13px;line-height:18px;color:#212121;letter-spacing:0.041px;left:561.1px;">(Demo) theo hóa đơn số 0000068</span>
<span class="t" style="top:374.70px;font-size:13px;line-height:18px;color:#212121;letter-spacing:-0.067px;right:910.07px;">929.500.000,00</span>
<span class="t" style="top:374.70px;font-size:13px;line-height:18px;color:#212121;letter-spacing:-0.133px;left:1031.6px;">Công ty Cổ phần LANDCO (Demo)</span>
<span class="t" style="top:374.70px;font-size:13px;line-height:18px;color:#212121;letter-spacing:0.106px;left:1259.3px;">Bán hàng hóa trong nước - Tiền mặt</span>
<span class="t" style="top:365.70px;font-size:13px;line-height:18px;color:#212121;letter-spacing:0.234px;left:1582.3px;">Bán hàng hóa trong</span>
<span class="t" style="top:383.70px;font-size:13px;line-height:18px;color:#212121;left:1582.3px;">nước - Tiền mặt</span>
<span class="t" style="top:374.47px;font-size:12.5px;line-height:18px;color:#1f78b8;font-weight:700;letter-spacing:0.447px;left:1823.2px;">Xem</span>
<span class="t" style="top:411.70px;font-size:13px;line-height:18px;color:#212121;letter-spacing:0.266px;left:319px;">25/11/2025</span>
<span class="t" style="top:411.70px;font-size:13px;line-height:18px;color:#2b82c4;letter-spacing:-0.378px;left:436.5px;">PT00027</span>
<span class="t" style="top:402.70px;font-size:13px;line-height:18px;color:#212121;letter-spacing:-0.031px;left:561.1px;">Thu tiền bán hàng Công ty Cổ phần WINEPLAZA</span>
<span class="t" style="top:420.70px;font-size:13px;line-height:18px;color:#212121;letter-spacing:0.041px;left:561.1px;">(Demo) theo hóa đơn số 0000084</span>
<span class="t" style="top:411.70px;font-size:13px;line-height:18px;color:#212121;letter-spacing:-0.067px;right:910.07px;">126.500.000,00</span>
<span class="t" style="top:402.70px;font-size:13px;line-height:18px;color:#212121;letter-spacing:-0.230px;left:1031.6px;">Công ty Cổ phần WINEPLAZA</span>
<span class="t" style="top:420.70px;font-size:13px;line-height:18px;color:#212121;letter-spacing:-0.029px;left:1031.6px;">(Demo)</span>
<span class="t" style="top:411.70px;font-size:13px;line-height:18px;color:#212121;letter-spacing:0.106px;left:1259.3px;">Bán hàng hóa trong nước - Tiền mặt</span>
<span class="t" style="top:402.70px;font-size:13px;line-height:18px;color:#212121;letter-spacing:0.234px;left:1582.3px;">Bán hàng hóa trong</span>
<span class="t" style="top:420.70px;font-size:13px;line-height:18px;color:#212121;left:1582.3px;">nước - Tiền mặt</span>
<span class="t" style="top:411.47px;font-size:12.5px;line-height:18px;color:#1f78b8;font-weight:700;letter-spacing:0.447px;left:1823.2px;">Xem</span>
<span class="t" style="top:448.70px;font-size:13px;line-height:18px;color:#35a020;letter-spacing:0.266px;left:319px;">24/11/2025</span>
<span class="t" style="top:448.70px;font-size:13px;line-height:18px;color:#2b82c4;letter-spacing:-0.378px;left:436.5px;">PT00106</span>
<span class="t" style="top:439.70px;font-size:13px;line-height:18px;color:#35a020;letter-spacing:0.185px;left:561.1px;">Thu tiền bán hàng Đồng Lành Mart theo hóa đơn</span>
<span class="t" style="top:457.70px;font-size:13px;line-height:18px;color:#35a020;letter-spacing:-0.050px;left:561.1px;">số 0000305</span>
<span class="t" style="top:448.70px;font-size:13px;line-height:18px;color:#35a020;letter-spacing:-0.067px;right:910.07px;">369.896.000,00</span>
<span class="t" style="top:448.70px;font-size:13px;line-height:18px;color:#35a020;letter-spacing:0.213px;left:1031.6px;">Đồng Lành Mart</span>
<span class="t" style="top:448.70px;font-size:13px;line-height:18px;color:#35a020;letter-spacing:0.106px;left:1259.3px;">Bán hàng hóa trong nước - Tiền mặt</span>
<span class="t" style="top:439.70px;font-size:13px;line-height:18px;color:#35a020;letter-spacing:0.234px;left:1582.3px;">Bán hàng hóa trong</span>
<span class="t" style="top:457.70px;font-size:13px;line-height:18px;color:#35a020;left:1582.3px;">nước - Tiền mặt</span>
<span class="t" style="top:448.47px;font-size:12.5px;line-height:18px;color:#1f78b8;font-weight:700;letter-spacing:0.447px;left:1823.2px;">Xem</span>
<span class="t" style="top:485.70px;font-size:13px;line-height:18px;color:#212121;letter-spacing:0.266px;left:319px;">22/11/2025</span>
<span class="t" style="top:485.70px;font-size:13px;line-height:18px;color:#2b82c4;letter-spacing:-0.435px;left:436.5px;">BGG00001</span>
<span class="t" style="top:485.70px;font-size:13px;line-height:18px;color:#212121;letter-spacing:-0.128px;right:910.13px;">16.500.000,00</span>
<span class="t" style="top:485.70px;font-size:13px;line-height:18px;color:#212121;letter-spacing:-0.231px;left:1031.6px;">Công ty TNHH LUX WINES (Demo)</span>
<span class="t" style="top:476.70px;font-size:13px;line-height:18px;color:#212121;letter-spacing:0.060px;left:1259.3px;">Giảm giá hàng bán - Tiền mặt (Từ bán hàng hóa,</span>
<span class="t" style="top:494.70px;font-size:13px;line-height:18px;color:#212121;letter-spacing:0.096px;left:1259.3px;">dịch vụ)</span>
<span class="t" style="top:476.70px;font-size:13px;line-height:18px;color:#212121;letter-spacing:0.072px;left:1582.3px;">Giảm giá hàng bán -</span>
<span class="t" style="top:494.70px;font-size:13px;line-height:18px;color:#212121;letter-spacing:0.258px;left:1582.3px;">Tiền mặt</span>
<span class="t" style="top:485.47px;font-size:12.5px;line-height:18px;color:#1f78b8;font-weight:700;letter-spacing:0.447px;left:1823.2px;">Xem</span>
<span class="t" style="top:509.84px;font-size:12px;line-height:17px;color:#111;font-weight:700;letter-spacing:-0.450px;left:339px;z-index:3;">Tổng</span>
<span class="t" style="top:509.84px;font-size:12px;line-height:17px;color:#111;font-weight:700;letter-spacing:-0.051px;right:909.05px;z-index:3;">17.545.033.080,00</span>
<span class="t" style="top:541.50px;font-size:13px;line-height:18px;color:#222;left:259.5px;">Tổng số:</span>
<span class="t" style="top:542.34px;font-size:12px;line-height:17px;color:#111;font-weight:700;letter-spacing:0.450px;left:313.3px;">81</span>
<span class="t" style="top:541.50px;font-size:13px;line-height:18px;color:#222;letter-spacing:0.224px;left:331px;">bản ghi</span>
<span class="t" style="top:542.00px;font-size:13px;line-height:18px;color:#222;letter-spacing:0.394px;left:1487.5px;">20 bản ghi trên 1 trang</span>
<span class="t" style="top:542.17px;font-size:12.5px;line-height:18px;color:#a3a3a3;letter-spacing:-0.289px;left:1693px;">Trước</span>
<span class="t" style="top:542.00px;font-size:13px;line-height:18px;color:#111;font-weight:700;left:1747.5px;">1</span>
<span class="t" style="top:540.70px;font-size:13px;line-height:18px;color:#222;left:1768px;">2</span>
<span class="t" style="top:540.70px;font-size:13px;line-height:18px;color:#222;left:1788.7px;">3</span>
<span class="t" style="top:541.50px;font-size:13px;line-height:18px;color:#222;letter-spacing:-0.450px;left:1809px;">...</span>
<span class="t" style="top:540.70px;font-size:13px;line-height:18px;color:#222;left:1831.7px;">5</span>
<span class="t" style="top:542.84px;font-size:12px;line-height:17px;color:#222;letter-spacing:-0.030px;left:1858.7px;">Sau</span>
<span class="t" style="top:591.82px;font-size:13.5px;line-height:19px;color:#111;font-weight:700;letter-spacing:-0.107px;left:256.5px;">Chi tiết</span>
<span class="t" style="top:621.00px;font-size:13px;line-height:18px;color:#111;font-weight:700;left:255px;">#</span>
<span class="t" style="top:621.84px;font-size:12px;line-height:17px;color:#111;font-weight:700;letter-spacing:0.036px;left:289.5px;">Diễn giải</span>
<span class="t" style="top:621.84px;font-size:12px;line-height:17px;color:#111;font-weight:700;letter-spacing:-0.508px;left:539.5px;">TK Nợ</span>
<span class="t" style="top:621.84px;font-size:12px;line-height:17px;color:#111;font-weight:700;letter-spacing:-1.000px;left:639.5px;">TK Có</span>
<span class="t" style="top:621.84px;font-size:12px;line-height:17px;color:#111;font-weight:700;letter-spacing:-0.136px;left:1838.8px;">Số tiền</span>
<span class="t" style="top:650.00px;font-size:13px;line-height:18px;color:#222;left:256px;">1</span>
<span class="t" style="top:650.00px;font-size:13px;line-height:18px;color:#222;left:289.5px;">Thu tiền của Khách lẻ</span>
<span class="t" style="top:650.00px;font-size:13px;line-height:18px;color:#222;letter-spacing:0.323px;left:540px;">1111</span>
<span class="t" style="top:650.00px;font-size:13px;line-height:18px;color:#222;letter-spacing:-0.450px;left:640px;">131</span>
<span class="t" style="top:650.00px;font-size:13px;line-height:18px;color:#222;letter-spacing:-0.155px;right:30.16px;">1.000.000,00</span>
<span class="t" style="top:678.54px;font-size:12px;line-height:17px;color:#111;font-weight:700;letter-spacing:-0.450px;left:289.5px;">Tổng</span>
<span class="t" style="top:678.64px;font-size:12px;line-height:17px;color:#111;font-weight:700;letter-spacing:-0.080px;right:30.08px;">1.000.000,00</span>
<span class="t" style="top:710.50px;font-size:13px;line-height:18px;color:#222;left:259.5px;">Tổng số:</span>
<span class="t" style="top:710.50px;font-size:13px;line-height:18px;color:#111;font-weight:700;left:313.3px;">1</span>
<span class="t" style="top:710.50px;font-size:13px;line-height:18px;color:#222;letter-spacing:0.307px;left:323px;">bản ghi</span>
<span class="t" style="top:710.80px;font-size:13px;line-height:18px;color:#222;letter-spacing:0.394px;left:1579px;">20 bản ghi trên 1 trang</span>
<span class="t" style="top:710.97px;font-size:12.5px;line-height:18px;color:#a3a3a3;letter-spacing:-0.289px;left:1784.5px;">Trước</span>
<span class="t" style="top:710.80px;font-size:13px;line-height:18px;color:#111;font-weight:700;left:1838.8px;">1</span>
<span class="t" style="top:711.64px;font-size:12px;line-height:17px;color:#a3a3a3;letter-spacing:-0.030px;left:1866.5px;">Sau</span>
<span class="t" style="top:16.17px;font-size:12.5px;line-height:18px;color:#9e9e9e;font-style:italic;letter-spacing:-0.234px;left:1112px;">Tìm kiếm thông minh</span>
<span class="t" style="top:15.84px;font-size:12px;line-height:17px;color:#5a6fe4;-webkit-text-stroke:0.3px #5a6fe4;letter-spacing:-0.344px;left:1264.5px;">AI</span>
<span class="t" style="top:14.82px;font-size:13.5px;line-height:19px;color:#7a7a7a;letter-spacing:-0.080px;left:1332.7px;">Hướng dẫn</span>
<span class="t" style="top:4.84px;font-size:12px;line-height:17px;color:#fff;font-weight:700;left:1533.8px;">2</span>
<span class="t" style="top:6.64px;font-size:12px;line-height:17px;color:#fff;-webkit-text-stroke:0.3px #fff;left:1736.3px;">6</span>
<span class="t" style="top:2.22px;font-size:11.5px;line-height:16px;color:#fff;font-weight:700;letter-spacing:-0.450px;left:1858.8px;">New</span>
</div></body></html>
